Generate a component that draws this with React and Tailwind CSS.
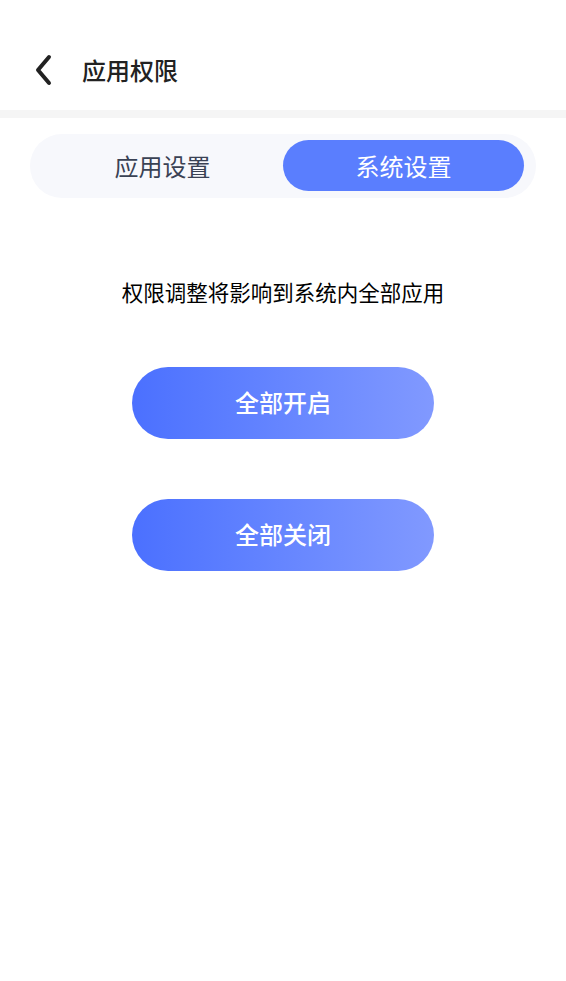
import { useState } from 'react';

const font = { fontFamily: '"Noto Sans CJK SC", "Noto Sans", sans-serif' };

function App() {
  const [tab, setTab] = useState('system');

  const tabClass = (active) =>
    active
      ? 'flex-1 h-[51px] rounded-full bg-[#5a7efe] text-white text-[24px] flex items-center justify-center'
      : 'flex-1 h-[51px] rounded-full text-[#3a4254] text-[24px] flex items-center justify-center';

  return (
    <div className="min-h-screen bg-white" style={font}>
      <div className="h-[110px] flex items-center pl-[30px] pt-[30px]">
        <button className="w-[28px] h-[40px] flex items-center justify-center">
          <svg width="22" height="32" viewBox="0 0 22 32" fill="none">
            <path d="M16 3 L5 16 L16 29" stroke="#222" strokeWidth="4" strokeLinecap="round" strokeLinejoin="round" />
          </svg>
        </button>
        <h1 className="ml-[24px] text-[24px] font-medium text-[#222] leading-none">应用权限</h1>
      </div>
      <div className="h-[8px] bg-[#f5f5f5]" />

      <div className="mx-[30px] mt-[16px] h-[64px] rounded-full bg-[#f7f8fc] px-[12px] pt-[6px] flex items-start">
        <button onClick={() => setTab('app')} className={tabClass(tab === 'app')}>
          应用设置
        </button>
        <button onClick={() => setTab('system')} className={tabClass(tab === 'system')}>
          系统设置
        </button>
      </div>

      <p className="mt-[80px] text-center text-[21.5px] text-black leading-[28px]">
        权限调整将影响到系统内全部应用
      </p>

      <div className="mt-[61px] flex flex-col items-center gap-[60px]">
        <button className="w-[302px] h-[72px] pb-[3px] rounded-full bg-gradient-to-r from-[#4b70ff] to-[#8199ff] text-white text-[24px] font-medium">
          全部开启
        </button>
        <button className="w-[302px] h-[72px] pb-[3px] rounded-full bg-gradient-to-r from-[#4b70ff] to-[#8199ff] text-white text-[24px] font-medium">
          全部关闭
        </button>
      </div>
    </div>
  );
}

export default App;
